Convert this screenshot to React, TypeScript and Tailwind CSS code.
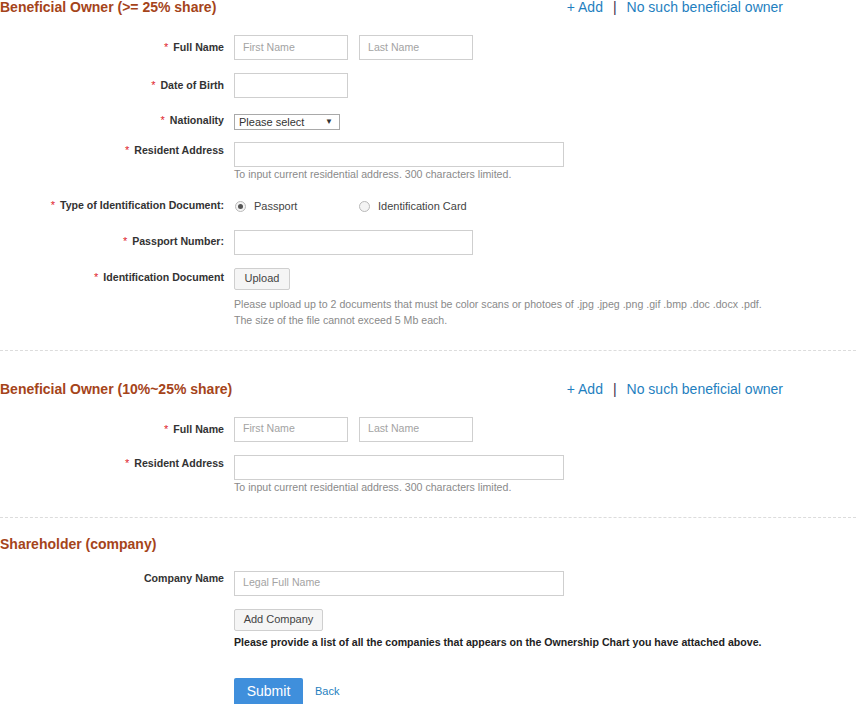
import type { ReactNode } from 'react';

const font = { fontFamily: '"Liberation Sans", Arial, sans-serif' };

// Label column on the left, field(s) on the right.
function Row({ label, required = true, className = '', labelPad = 'pt-[6px]', children }: {
  label: string;
  required?: boolean;
  className?: string;
  labelPad?: string;
  children: ReactNode;
}) {
  return (
    <div className={`flex items-start gap-[10px] ${className}`}>
      <div className={`w-[224px] shrink-0 text-right text-[10.6px] font-bold leading-[13px] text-[#333] ${labelPad}`}>
        {required && <span className="mr-[5px] align-top text-[11px] font-normal text-[#e0222c]">*</span>}
        {label}
      </div>
      <div className="flex-1">{children}</div>
    </div>
  );
}

function TextBox({ placeholder = '', w = 'w-[114px]' }: { placeholder?: string; w?: string }) {
  return (
    <div className={`flex h-[25px] items-center border border-[#cfcfcf] bg-white px-[8px] text-[10.6px] text-[#a3a3a3] ${w}`}>
      {placeholder}
    </div>
  );
}

function Radio({ checked }: { checked?: boolean }) {
  return (
    <span className="flex h-[11px] w-[11px] items-center justify-center rounded-full border border-[#b9b9b9] bg-[#f4f4f4]">
      {checked && <span className="h-[5px] w-[5px] rounded-full bg-[#555]" />}
    </span>
  );
}

function SectionHeader({ title, links = true, className = '' }: { title: string; links?: boolean; className?: string }) {
  return (
    <div className={`flex w-[783px] items-center justify-between ${className}`}>
      <h2 className="text-[14px] font-bold leading-[18px] text-[#a5441a]">{title}</h2>
      {links && (
        <div className="flex items-center text-[14px] leading-[18px] text-[#1f7fc0]">
          <span>+ Add</span>
          <span className="mx-[10px] text-[#3b2b4a]">|</span>
          <span>No such beneficial owner</span>
        </div>
      )}
    </div>
  );
}

function Help({ children, className = '' }: { children: ReactNode; className?: string }) {
  return <div className={`text-[10.6px] leading-[16px] text-[#8a8a8a] ${className}`}>{children}</div>;
}

export default function App() {
  return (
    <div className="h-[704px] w-[856px] overflow-hidden bg-white" style={font}>
      <SectionHeader title="Beneficial Owner (>= 25% share)" className="mt-[-2px]" />

      <Row label="Full Name" className="mt-[19px]">
        <div className="flex gap-[11px]">
          <TextBox placeholder="First Name" />
          <TextBox placeholder="Last Name" />
        </div>
      </Row>

      <Row label="Date of Birth" className="mt-[13px]">
        <TextBox />
      </Row>

      <Row label="Nationality" className="mt-[16px]" labelPad="pt-[0px]">
        <div className="flex h-[16px] w-[106px] items-center justify-between border border-[#a9a9a9] bg-white pl-[4px] pr-[6px] text-[11px] text-[#333]">
          <span>Please select</span>
          <span className="text-[8px]">▼</span>
        </div>
      </Row>

      <Row label="Resident Address" className="mt-[12px]" labelPad="pt-[2px]">
        <TextBox w="w-[330px]" />
        <Help className="mt-[-1px]">To input current residential address. 300 characters limited.</Help>
      </Row>

      <Row label="Type of Identification Document:" className="mt-[16px]" labelPad="pt-[1px]">
        <div className="flex items-center text-[11px] text-[#444]">
          <span className="ml-[1px]"><Radio checked /></span>
          <span className="ml-[8px] w-[105px]">Passport</span>
          <Radio />
          <span className="ml-[8px]">Identification Card</span>
        </div>
      </Row>

      <Row label="Passport Number:" className="mt-[15px]" labelPad="pt-[5px]">
        <TextBox w="w-[239px]" />
      </Row>

      <Row label="Identification Document" className="mt-[13px]" labelPad="pt-[3px]">
        <div className="flex h-[22px] w-[56px] items-center justify-center rounded-[2px] border border-[#cfcfcf] bg-[#f5f5f5] text-[11px] text-[#444]">
          Upload
        </div>
        <Help className="mt-[6px]">
          Please upload up to 2 documents that must be color scans or photoes of .jpg .jpeg .png .gif .bmp .doc .docx .pdf.
          <br />
          The size of the file cannot exceed 5 Mb each.
        </Help>
      </Row>

      <div className="mt-[22px] border-t border-dashed border-[#dcdcdc]" />

      <SectionHeader title="Beneficial Owner (10%~25% share)" className="mt-[29px]" />

      <Row label="Full Name" className="mt-[19px]">
        <div className="flex gap-[11px]">
          <TextBox placeholder="First Name" />
          <TextBox placeholder="Last Name" />
        </div>
      </Row>

      <Row label="Resident Address" className="mt-[13px]" labelPad="pt-[2px]">
        <TextBox w="w-[330px]" />
        <Help className="mt-[-1px]">To input current residential address. 300 characters limited.</Help>
      </Row>

      <div className="mt-[22px] border-t border-dashed border-[#dcdcdc]" />

      <SectionHeader title="Shareholder (company)" links={false} className="mt-[17px]" />

      <Row label="Company Name" required={false} className="mt-[18px]" labelPad="pt-[1px]">
        <TextBox placeholder="Legal Full Name" w="w-[330px]" />
        <div className="mt-[13px] flex h-[22px] w-[89px] items-center justify-center rounded-[2px] border border-[#cfcfcf] bg-[#f5f5f5] text-[11px] text-[#444]">
          Add Company
        </div>
        <div className="mt-[4px] text-[10.6px] font-bold leading-[14px] text-[#222]">
          Please provide a list of all the companies that appears on the Ownership Chart you have attached above.
        </div>
        <div className="mt-[29px] flex items-center">
          <div className="flex h-[28px] w-[69px] items-center justify-center rounded-[2px] bg-[#3f8fdc] text-[14px] text-white">
            Submit
          </div>
          <span className="ml-[12px] text-[11px] text-[#1f7fc0]">Back</span>
        </div>
      </Row>
    </div>
  );
}
